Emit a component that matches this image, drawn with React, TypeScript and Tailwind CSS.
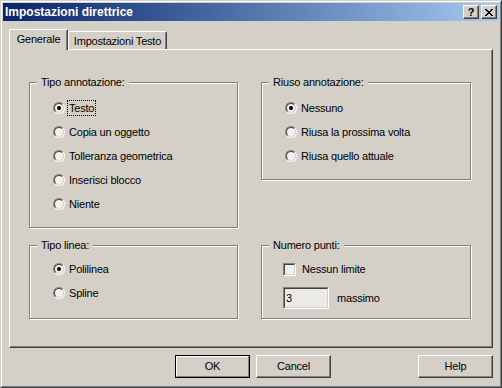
const Radio = ({ checked }: { checked?: boolean }) => (
  <span className="w-3 h-3 shrink-0 rounded-full border border-t-[#808080] border-l-[#808080] border-b-white border-r-white flex items-center justify-center">
    <span className="w-[10px] h-[10px] rounded-full border border-t-[#404040] border-l-[#404040] border-b-[#d4d0c8] border-r-[#d4d0c8] bg-[#f1f0ec] flex items-center justify-center">
      {checked && <span className="w-1 h-1 rounded-full bg-black" />}
    </span>
  </span>
);

const RadioRow = ({ label, checked, focus }: { label: string; checked?: boolean; focus?: boolean }) => (
  <div className="h-[24px] flex items-center gap-[4px]">
    <Radio checked={checked} />
    <span className={focus ? "outline outline-1 outline-dotted outline-black px-[1px] -ml-[1px] leading-[14px]" : ""}>{label}</span>
  </div>
);

const Group = ({ title, className, children }: { title: string; className?: string; children?: React.ReactNode }) => (
  <div className={`border border-[#808080] shadow-[inset_1px_1px_0_#fff,1px_1px_0_#fff] ${className ?? ""}`}>
    <div className="-mt-[7px] ml-[7px] px-[4px] w-fit bg-[#d4d0c8] leading-[13px]">{title}</div>
    {children}
  </div>
);

const TitleBtn = ({ children }: { children: React.ReactNode }) => (
  <div className="w-4 h-[14px] bg-[#d4d0c8] border border-t-white border-l-white border-r-[#404040] border-b-[#404040] shadow-[inset_-1px_-1px_0_#808080] flex items-center justify-center">
    {children}
  </div>
);

const Btn = ({ label, def, className }: { label: string; def?: boolean; className?: string }) =>
  def ? (
    <div className={`w-[75px] h-[23px] border border-black ${className ?? ""}`}>
      <div className="w-full h-full border border-t-white border-l-white border-r-[#808080] border-b-[#808080] flex items-center justify-center">
        {label}
      </div>
    </div>
  ) : (
    <div className={`w-[75px] h-[23px] border border-t-white border-l-white border-r-[#404040] border-b-[#404040] shadow-[inset_-1px_-1px_0_#808080] flex items-center justify-center ${className ?? ""}`}>
      {label}
    </div>
  );

export default function App() {
  return (
    <div className="w-[502px] h-[388px] bg-[#d4d0c8] border border-t-[#d4d0c8] border-l-[#d4d0c8] border-r-[#404040] border-b-[#404040] font-['Liberation_Sans',Arial,sans-serif] text-[11px] tracking-[-0.2px] text-black select-none">
      <div className="w-full h-full border border-t-white border-l-white border-r-[#808080] border-b-[#808080] p-[1px] flex flex-col">
        {/* title bar */}
        <div className="h-[18px] shrink-0 bg-gradient-to-r from-[#0a246a] to-[#a6caf0] flex items-center pl-[2px] pr-[2px]">
          <span className="text-white font-bold text-[12px] tracking-normal leading-none">Impostazioni direttrice</span>
          <div className="ml-auto flex gap-[2px]">
            <TitleBtn>
              <span className="font-bold text-[11px] leading-none tracking-normal">?</span>
            </TitleBtn>
            <TitleBtn>
              <svg width="8" height="7" viewBox="0 0 8 7" shapeRendering="crispEdges">
                <path d="M0 0h2v1H0zM6 0h2v1H6zM1 1h2v1H1zM5 1h2v1H5zM2 2h4v1H2zM3 3h2v1H3zM2 4h4v1H2zM1 5h2v1H1zM5 5h2v1H5zM0 6h2v1H0zM6 6h2v1H6z" fill="#000" />
              </svg>
            </TitleBtn>
          </div>
        </div>

        {/* tabs */}
        <div className="pt-[8px] pl-[6px] h-[28px] flex items-end shrink-0">
          <div className="relative z-10 w-[59px] h-[21px] -mb-[1px] bg-[#d4d0c8] border-t border-l border-r border-t-white border-l-white border-r-[#404040] rounded-t-[2px] shadow-[inset_-1px_0_0_#808080] flex items-center justify-center pb-[1px]">
            Generale
          </div>
          <div className="w-[99px] h-[18px] ml-[0px] border-t border-l border-r border-t-white border-l-white border-r-[#404040] rounded-t-[2px] shadow-[inset_-1px_0_0_#808080] flex items-center justify-center pt-[2px]">
            Impostazioni Testo
          </div>
        </div>

        {/* panel */}
        <div className="ml-[6px] w-[484px] h-[299px] shrink-0 border border-t-white border-l-white border-r-[#404040] border-b-[#404040] shadow-[inset_-1px_-1px_0_#808080] pl-[19px] pt-[32px]">
          <div className="grid grid-cols-[209px_210px] gap-x-[23px] gap-y-[17px]">
            <Group title="Tipo annotazione:" className="h-[146px]">
              <div className="pl-[23px] mt-[7px]">
                <RadioRow label="Testo" checked focus />
                <RadioRow label="Copia un oggetto" />
                <RadioRow label="Tolleranza geometrica" />
                <RadioRow label="Inserisci blocco" />
                <RadioRow label="Niente" />
              </div>
            </Group>
            <Group title="Riuso annotazione:" className="h-[98px] self-start">
              <div className="pl-[23px] mt-[7px]">
                <RadioRow label="Nessuno" checked />
                <RadioRow label="Riusa la prossima volta" />
                <RadioRow label="Riusa quello attuale" />
              </div>
            </Group>
            <Group title="Tipo linea:" className="h-[74px]">
              <div className="pl-[23px] mt-[5px]">
                <RadioRow label="Polilinea" checked />
                <RadioRow label="Spline" />
              </div>
            </Group>
            <Group title="Numero punti:" className="h-[74px]">
              <div className="pl-[21px] mt-[5px]">
                <div className="h-[24px] flex items-center gap-[6px]">
                  <span className="w-[13px] h-[13px] shrink-0 border border-t-[#808080] border-l-[#808080] border-b-white border-r-white">
                    <span className="block w-full h-full border border-t-[#404040] border-l-[#404040] border-b-[#d4d0c8] border-r-[#d4d0c8] bg-[#f1f0ec]" />
                  </span>
                  <span>Nessun limite</span>
                </div>
                <div className="mt-[6px] flex items-center">
                  <div className="w-[46px] h-[22px] border border-t-[#808080] border-l-[#808080] border-b-white border-r-white">
                    <div className="w-full h-full border border-t-[#404040] border-l-[#404040] border-b-[#d4d0c8] border-r-[#d4d0c8] bg-[#ebeae4] pl-[1px] flex items-center">
                      3
                    </div>
                  </div>
                  <span className="ml-[8px]">massimo</span>
                </div>
              </div>
            </Group>
          </div>
        </div>

        {/* buttons */}
        <div className="mt-[7px] flex justify-end pr-[6px] gap-[6px]">
          <Btn label="OK" def />
          <Btn label="Cancel" className="mr-[81px]" />
          <Btn label="Help" />
        </div>
      </div>
    </div>
  );
}
